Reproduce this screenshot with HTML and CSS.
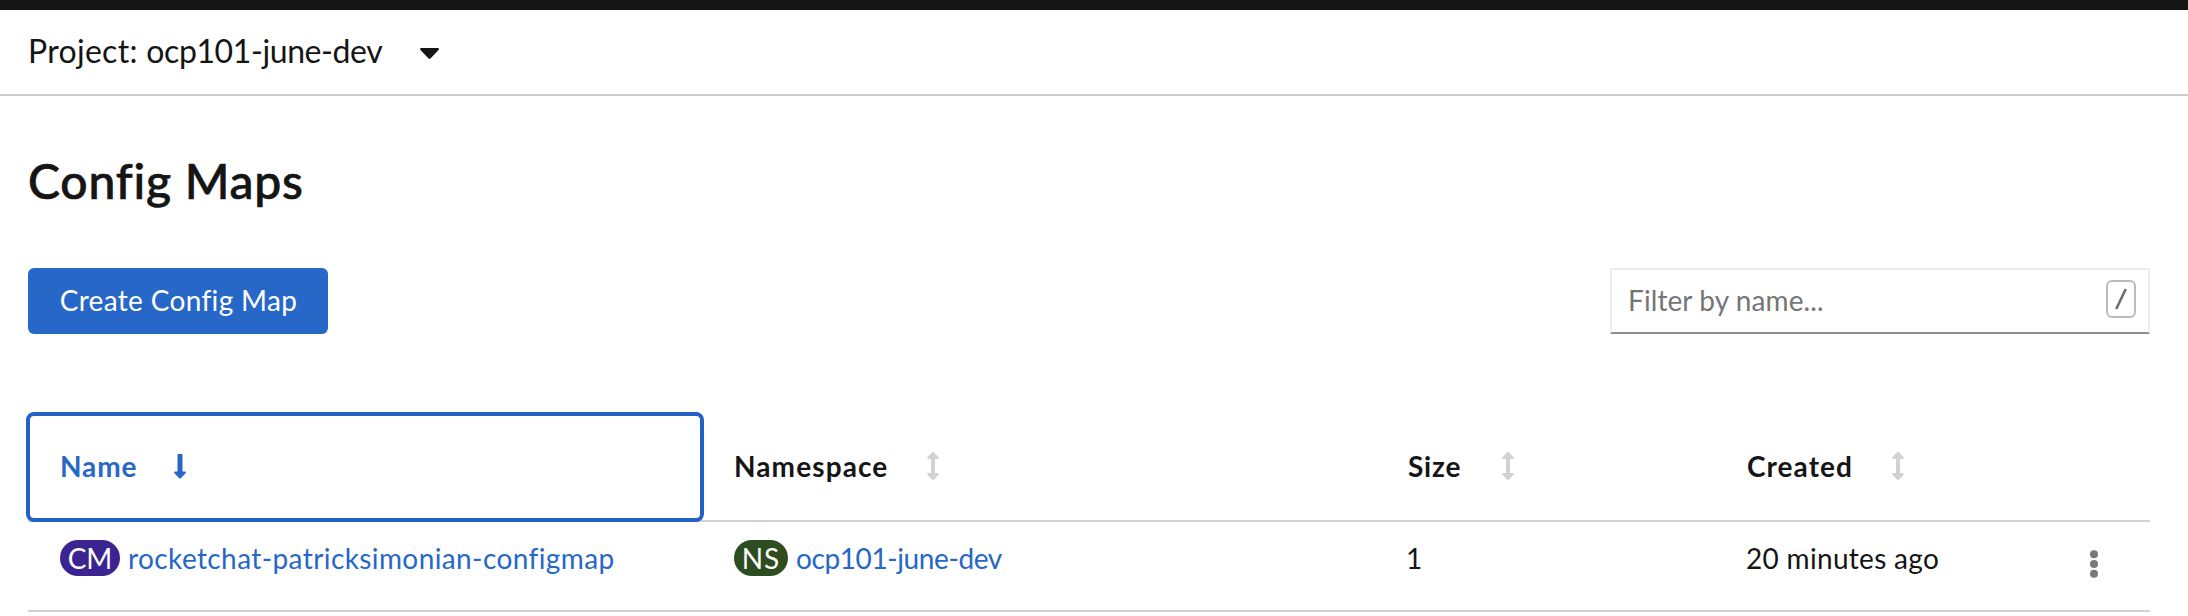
FILE: index.html
```
<!DOCTYPE html>
<html lang="en">
<head>
<meta charset="utf-8">
<title>Config Maps</title>
<link rel="stylesheet" href="styles.css">
</head>
<body>
<svg class="sprite" aria-hidden="true">
  <symbol id="sort" viewBox="0 0 12 28"><path d="M5.2.3Q6-.2 6.800.3L11.400 4.900Q12.500 6.600 11 7H8V21H11Q12.500 21.400 11.400 23.100L6.800 27.700Q6 28.200 5.200 27.700L.6 23.100Q-.5 21.400 1 21H4V7H1Q-.5 6.600.6 4.900Z"/></symbol>
  <symbol id="sorted" viewBox="0 0 12 25"><path d="M4.200 0H7.800Q8.500 0 8.500.7V17.500H11Q12.500 17.900 11.400 19.600L6.800 24.300Q6 24.900 5.200 24.300L.6 19.600Q-.5 17.900 1 17.500H3.500V.7Q3.500 0 4.200 0Z"/></symbol>
</svg>
<header class="masthead"></header>
<nav class="project-bar">
  <span class="project-name"><span class="prefix">Project: </span>ocp101-june-dev</span>
  <svg class="caret" viewBox="0 0 19 11"><path d="M1.300 0H17.700Q19.600.4 18.500 2L10.700 10.200Q9.500 11.300 8.300 10.200L.5 2Q-.6.4 1.300 0Z"/></svg>
</nav>
<main class="page">
  <h1 class="title">Config Maps</h1>
  <div class="toolbar">
    <button class="create">Create Config Map</button>
    <div class="filter">
      <span class="placeholder">Filter by name...</span>
      <kbd class="key"><svg class="slash" viewBox="0 0 12 22"><path d="M1.200 21L10.800 1"/></svg></kbd>
    </div>
  </div>
  <section class="table">
    <div class="row head">
      <div class="cell active"><span class="name">Name</span><svg class="sorted"><use href="#sorted"/></svg></div>
      <div class="cell"><span class="namespace">Namespace</span><svg class="sort"><use href="#sort"/></svg></div>
      <div class="cell"><span class="size">Size</span><svg class="sort"><use href="#sort"/></svg></div>
      <div class="cell"><span class="created">Created</span><svg class="sort"><use href="#sort"/></svg></div>
    </div>
    <div class="row data">
      <div class="cell"><span class="badge cm">CM</span><a class="link map">rocketchat-patricksimonian-configmap</a></div>
      <div class="cell"><span class="badge ns">NS</span><a class="link project">ocp101-june-dev</a></div>
      <div class="cell count">1</div>
      <div class="cell age">20 minutes ago</div>
      <div class="actions"><svg class="kebab" viewBox="0 0 8 28"><circle cx="4" cy="4.300" r="4"/><circle cx="4" cy="14" r="4"/><circle cx="4" cy="23.700" r="4"/></svg></div>
    </div>
  </section>
</main>
</body>
</html>
```
FILE: styles.css
```
* { box-sizing: border-box; }
body { margin: 0; height: 616px; overflow: hidden; background: #fff; color: #151515; font: 28px/36px Lato, "Open Sans", sans-serif; font-variant-ligatures: none; }
.sprite { display: none; }
.masthead { height: 10px; background: #151515; }
.project-bar { display: flex; align-items: center; height: 86px; padding: 0 28px 3px; border-bottom: 2px solid #ccc; }
.project-name { width: 392px; font-size: 32px; line-height: 40px; letter-spacing: -.4px; }
.prefix { letter-spacing: .3px; }
.caret { width: 19px; height: 11px; margin-top: 5px; fill: #151515; }
.page { padding: 56px 38px 0 28px; }
.title { margin: 0; font-size: 48px; line-height: 58px; font-weight: 500; letter-spacing: .8px; -webkit-text-stroke: .7px #151515; }
.toolbar { display: flex; justify-content: space-between; margin-top: 58px; }
.create { width: 300px; height: 66px; padding: 0 0 2px 1px; border: 0; border-radius: 6px; background: #2667c7; color: #fff; font: inherit; letter-spacing: .34px; }
.filter { display: flex; align-items: center; justify-content: space-between; width: 540px; height: 66px; padding: 0 12px 0 16px; border: 2px solid #ededed; border-bottom-color: #8a8d90; color: #757575; }
.placeholder { padding-bottom: 2px; letter-spacing: .1px; }
.key { display: grid; place-items: center; width: 30px; height: 38px; margin-bottom: 4px; border: 2px solid #bbb; border-radius: 6px; }
.slash { width: 12px; height: 22px; fill: none; stroke: #6a6e73; stroke-width: 2.6; }
.table { margin-top: 80px; }
.row { display: grid; grid-template-columns: 674px 674px 339px 355px 80px; border-bottom: 2px solid #d2d2d2; }
.head { height: 108px; font-weight: 700; }
.cell { display: flex; align-items: center; padding: 0 0 2px 32px; white-space: nowrap; }
.active { color: #2667c7; outline: 4px solid #2461c4; outline-offset: -2px; border-radius: 6px; }
.head .cell span { padding-right: 39px; }
.head .cell .name { padding-right: 37px; letter-spacing: .9px; }
.namespace { letter-spacing: 1.1px; }
.head .cell .size { padding-right: 41px; letter-spacing: .8px; }
.created { letter-spacing: 1.05px; }
.sort { width: 12px; height: 28px; fill: #d2d2d2; }
.sorted { width: 12px; height: 25px; fill: #2667c7; }
.data { height: 90px; }
.data .cell { align-items: flex-start; padding-top: 18px; }
.badge { display: flex; justify-content: center; height: 36px; margin-right: 8px; border-radius: 18px; line-height: 36px; color: #fff; }
.cm { width: 60px; background: #3b2491; }
.ns { width: 54px; background: #2d4d20; letter-spacing: 1px; }
.link { color: #2667c7; }
.map { letter-spacing: .4px; }
.project { letter-spacing: -.4px; }
.data .count { padding-left: 30px; }
.data .age { padding-left: 31px; letter-spacing: .31px; }
.actions { padding: 28px 0 0 20px; }
.kebab { display: block; width: 8px; height: 28px; fill: #76787c; }
```
